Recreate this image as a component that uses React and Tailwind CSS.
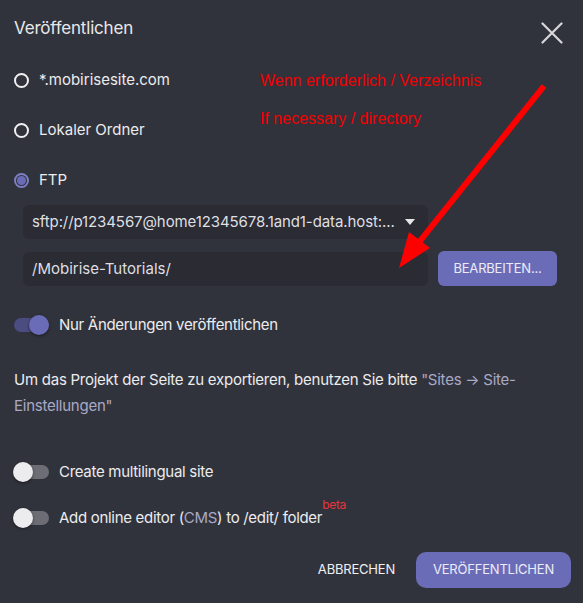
import { useState } from "react";

function Radio({ checked, label }) {
  return (
    <div className="flex items-center gap-[10px] h-[50px]">
      {checked ? (
        <span className="w-[15px] h-[15px] rounded-full border-2 border-[#7d7ec4] flex items-center justify-center">
          <span className="w-[9px] h-[9px] rounded-full bg-[#6b6cb8]" />
        </span>
      ) : (
        <span className="w-[15px] h-[15px] rounded-full border-[2.5px] border-[#f0f0f2]" />
      )}
      <span className="text-[15px] text-[#ececee]">{label}</span>
    </div>
  );
}

function Toggle({ on, children }) {
  return (
    <div className="flex items-center gap-[10px] h-[22px]">
      <span
        className={
          "relative w-[35px] h-[14px] rounded-full " + (on ? "bg-[#4b4c80]" : "bg-[#6d6e75]")
        }
      >
        <span
          className={
            "absolute top-1/2 -translate-y-1/2 w-[20px] h-[20px] rounded-full shadow-[0_1px_3px_rgba(0,0,0,0.5)] " +
            (on ? "right-0 bg-[#6b6cb8]" : "left-[-1px] bg-[#ececee]")
          }
        />
      </span>
      <span className="text-[15px] text-[#ececee] tracking-[-0.3px]">{children}</span>
    </div>
  );
}

export default function App() {
  const [path, setPath] = useState("/Mobirise-Tutorials/");

  return (
    <div
      className="relative w-[583px] h-[603px] bg-[#31333c] overflow-hidden text-[#ececee]"
      style={{ fontFamily: "Inter, 'Noto Sans', sans-serif" }}
    >
      <div className="flex items-start justify-between pl-[14px] pr-[20px] pt-[8px] h-[48px]">
        <h1 className="text-[17px] leading-[40px] font-normal text-[#e8e8ea] tracking-[-0.2px]">
          Veröffentlichen
        </h1>
        <svg width="22" height="22" viewBox="0 0 22 22" className="mt-[14px]">
          <path d="M1.5 1.5 L20.5 20.5 M20.5 1.5 L1.5 20.5" stroke="#d8d8dc" strokeWidth="2.2" strokeLinecap="round" />
        </svg>
      </div>

      <div className="relative px-[14px] mt-[7px]">
        <Radio label="*.mobirisesite.com" />
        <Radio label="Lokaler Ordner" />
        <Radio checked label="FTP" />

        <div
          className="absolute left-[260px] top-[7px] text-[#f20000] text-[16px] leading-[38px]"
          style={{ fontFamily: "'Liberation Sans', Arial, sans-serif" }}
        >
          <div>Wenn erforderlich / Verzeichnis</div>
          <div>If necessary / directory</div>
        </div>
      </div>

      <div className="pl-[23px] pr-[26px] flex flex-col gap-[12px]">
        <div className="w-[405px] h-[34px] rounded-[6px] bg-[#2a2b33] flex items-center justify-between pl-[9px] pr-[13px]">
          <span className="text-[15px] text-[#dfdfe2] truncate tracking-[-0.1px]">
            sftp://p1234567@home12345678.1and1-data.host:...
          </span>
          <svg width="10" height="6" viewBox="0 0 10 6">
            <path d="M0 0 L10 0 L5 6 Z" fill="#e6e6e8" />
          </svg>
        </div>
        <div className="flex items-center gap-[10px]">
          <input
            value={path}
            onChange={(e) => setPath(e.target.value)}
            className="w-[405px] h-[34px] rounded-[6px] bg-[#2a2b33] pl-[9px] text-[15px] text-[#dfdfe2] outline-none"
          />
          <button className="w-[119px] h-[35px] rounded-[6px] bg-[#6b6cb8] text-[13px] text-[#ececf6] tracking-[-0.2px]">
            BEARBEITEN...
          </button>
        </div>
      </div>

      <div className="px-[14px] mt-[28px]">
        <Toggle on>Nur Änderungen veröffentlichen</Toggle>
      </div>

      <p className="pl-[14px] pr-[14px] mt-[31px] text-[15px] leading-[26px] text-[#ececee] tracking-[-0.25px]">
        Um das Projekt der Seite zu exportieren, benutzen Sie bitte{" "}
        <span className="text-[#a9a9c6]">"Sites → Site-Einstellungen"</span>
      </p>

      <div className="px-[14px] mt-[42px] flex flex-col gap-[24px]">
        <Toggle>Create multilingual site</Toggle>
        <Toggle>
          Add online editor (<span className="text-[#a9a9c6]">CMS</span>) to /edit/ folder
          <span className="relative top-[-14px] text-[12px] text-[#e8333c]">beta</span>
        </Toggle>
      </div>

      <div className="flex justify-end items-center gap-[21px] pr-[12px] mt-[23px]">
        <button className="text-[13px] text-[#f0f0f2] tracking-[-0.2px]">ABBRECHEN</button>
        <button className="w-[155px] h-[36px] rounded-[10px] bg-[#6b6cb8] text-[13px] text-[#ececf6] tracking-[-0.2px]">
          VERÖFFENTLICHEN
        </button>
      </div>

      <svg className="absolute left-0 top-0 pointer-events-none" width="583" height="603">
        <path d="M544 86 L416 246" stroke="#ff0000" strokeWidth="6" />
        <path d="M399 268 L409 232 L430 248 Z" fill="#ff0000" />
      </svg>
    </div>
  );
}
